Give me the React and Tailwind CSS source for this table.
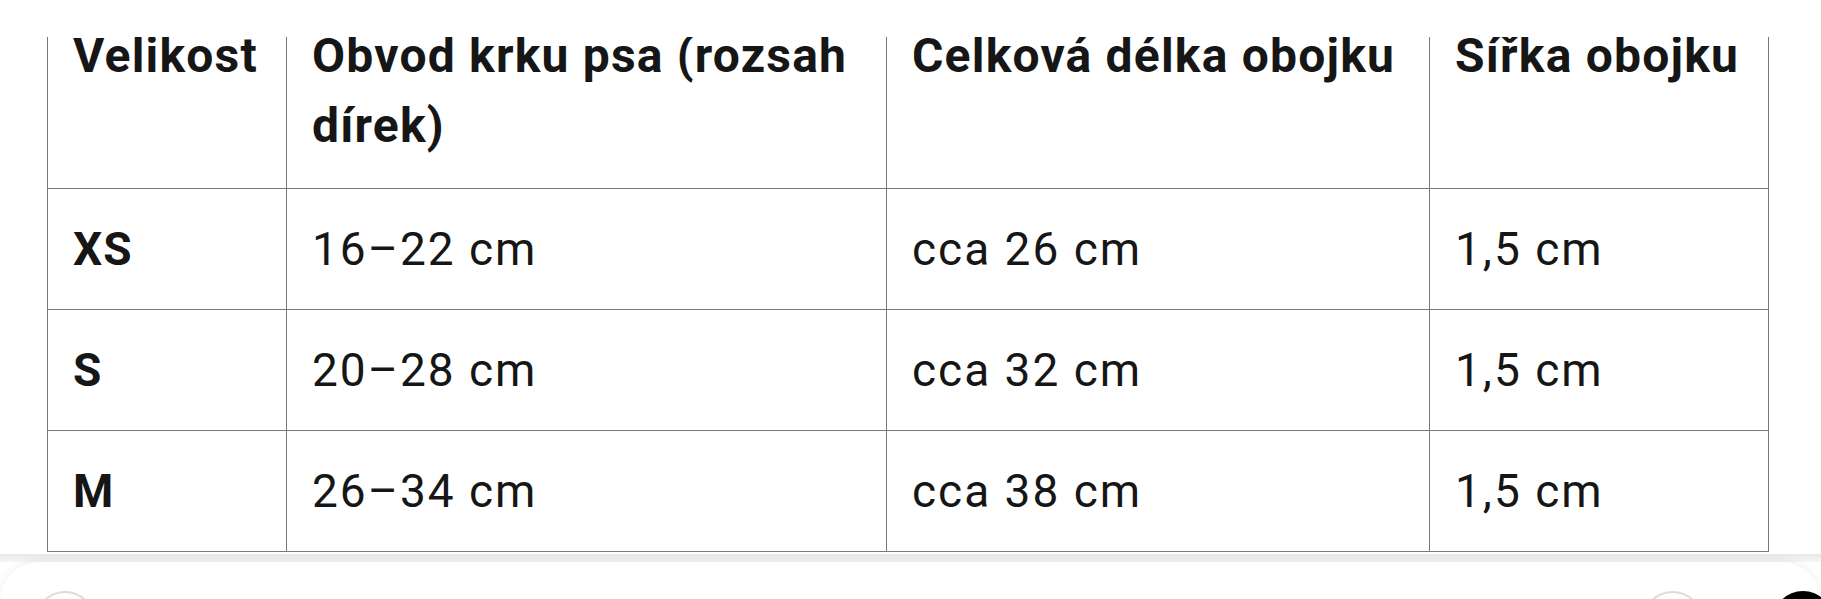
import React from "react";

const HEAD = ["Velikost", "Obvod krku psa (rozsah dírek)", "Celková délka obojku", "Sířka obojku"];

const ROWS = [
  ["XS", "16–22 cm", "cca 26 cm", "1,5 cm"],
  ["S", "20–28 cm", "cca 32 cm", "1,5 cm"],
  ["M", "26–34 cm", "cca 38 cm", "1,5 cm"],
];

const WIDTHS = ["w-[239px]", "w-[600px]", "w-[543px]", "w-[339px]"];

export default function App() {
  return (
    <div className="relative h-[599px] w-full overflow-hidden bg-white text-[#161616] font-['Roboto','Liberation_Sans',sans-serif]">
      {/* sticky header hides the table top */}
      <div className="absolute left-0 right-0 top-0 z-10 h-[37px] bg-white"></div>

      <div className="flex flex-col pl-[47px] pt-[21px]">
        <table className="w-[1722px] table-fixed border-collapse">
          <thead>
            <tr className="h-[167px]">
              {HEAD.map((h, i) => (
                <th
                  key={i}
                  className={`${WIDTHS[i]} border-x border-b border-[#7a7a7a] px-[25px] pb-[27px] pt-0 text-left align-top text-[48px] font-bold leading-[70px] tracking-[1.2px]`}
                >
                  {h}
                </th>
              ))}
            </tr>
          </thead>
          <tbody>
            {ROWS.map((r, ri) => (
              <tr key={ri} className="h-[121px]">
                {r.map((c, ci) => (
                  <td
                    key={ci}
                    className={`border border-[#7a7a7a] px-[25px] align-middle text-[46px] leading-[54px] ${ci === 0 ? "font-bold tracking-[1px]" : "font-normal tracking-[2px]"}`}
                  >
                    {c}
                  </td>
                ))}
              </tr>
            ))}
          </tbody>
        </table>
      </div>

      {/* bottom sheet */}
      <div className="mt-[2px] h-[8px] w-full bg-gradient-to-b from-[#e9e9e9] to-[#f6f6f6]"></div>
      <div className="relative h-[80px] w-full rounded-t-[40px] bg-white shadow-[0_-3px_8px_rgba(0,0,0,0.05)]">
        <div className="flex items-start justify-between pl-[35px] pt-[29px]">
          <div className="h-[60px] w-[60px] rounded-full border-2 border-[#dcdcdc]"></div>
          <div className="flex items-start gap-[70px]">
            <div className="h-[61px] w-[61px] rounded-full border-2 border-[#dcdcdc]"></div>
            <div className="-mr-[12px] h-[60px] w-[60px] rounded-full bg-black"></div>
          </div>
        </div>
      </div>
    </div>
  );
}
